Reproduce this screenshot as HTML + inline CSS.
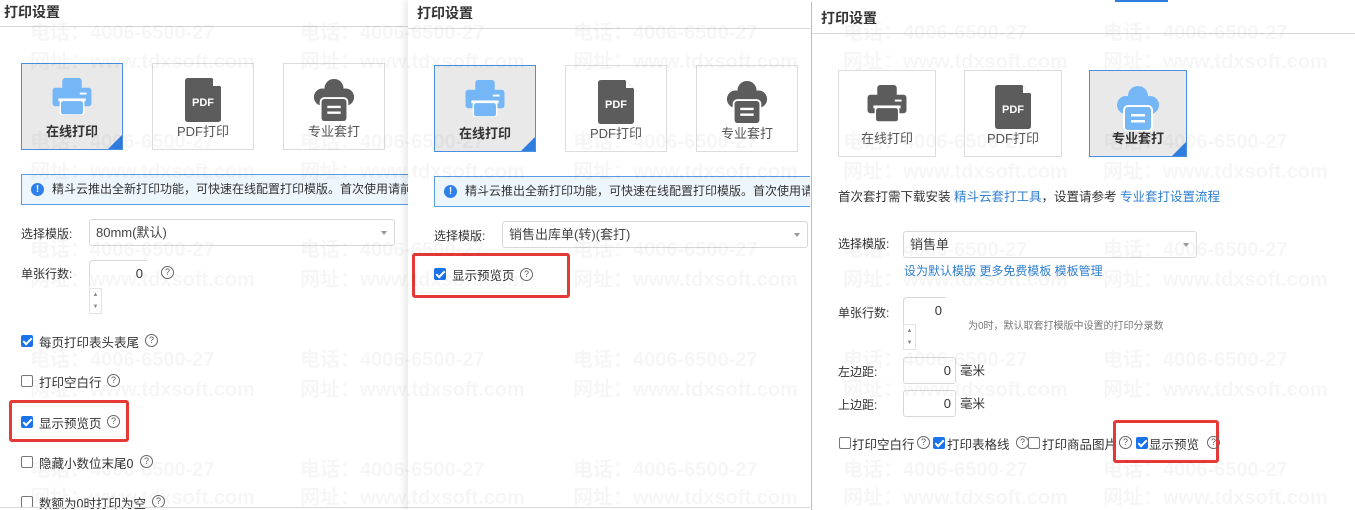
<!DOCTYPE html>
<html><head><meta charset="utf-8"><style>
*{margin:0;padding:0;box-sizing:border-box}
body{width:1355px;height:510px;overflow:hidden;background:#fff;font-family:"Liberation Sans","Noto Sans CJK SC",sans-serif;font-size:13px;color:#333;position:relative}
.a{position:absolute}
.panel{position:absolute;background:#fff;overflow:hidden}
.title{position:absolute;font-weight:bold;font-size:14px;color:#333}
.hr{position:absolute;height:1px;background:#d8d8d8}
.card{position:absolute;width:102px;height:87px;border:1px solid #dcdcdc;background:#fff}
.card.sel{border-color:#4a8fe0;background:#e9e9e9}
.card.sel:after{content:"";position:absolute;right:0;bottom:0;border-style:solid;border-width:0 0 14px 14px;border-color:transparent transparent #2f7de1 transparent}
.card svg{position:absolute;left:50%;transform:translateX(-50%);top:14px}
.card .lb{position:absolute;left:0;right:0;top:57px;text-align:center;font-size:13px;color:#555}
.card.sel .lb{color:#333;font-weight:bold}
.info{position:absolute;height:31px;border:1px solid #5b9be0;background:#eef6fd;font-size:12px;color:#333;line-height:29px;padding-left:30px;white-space:nowrap;overflow:hidden}
.info i{position:absolute;left:9px;top:8px;width:13px;height:13px;border-radius:50%;background:#2f80e8;color:#fff;font-style:normal;font-weight:bold;font-size:10px;line-height:13px;text-align:center}
.sel2{position:absolute;height:27px;border:1px solid #d8d8d8;border-radius:3px;font-size:13px;line-height:25px;padding-left:6px;color:#444}
.sel2:after{content:"";position:absolute;right:7px;top:11px;border-style:solid;border-width:4px 3px 0 3px;border-color:#999 transparent transparent}
.lab{position:absolute;font-size:12px;color:#333}
.inp{position:absolute;height:27px;border-top:1px solid #d8d8d8;border-left:1px solid #d8d8d8;border-radius:4px 0 0 0;text-align:right;padding-right:4px;font-size:13px;line-height:25px}
.inp2{position:absolute;height:27px;border:1px solid #d8d8d8;border-radius:3px;text-align:right;padding-right:4px;font-size:13px;line-height:25px}
.spin{position:absolute;width:13px;height:26px;border:1px solid #e3e3e3;font-size:6px;color:#888;text-align:center;line-height:12px}
.cb{position:absolute;width:12px;height:12px;border:1px solid #777;border-radius:2px;background:#fff}
.cb.on{background:#1a73e8;border-color:#1a73e8}
.cb.on:after{content:"";position:absolute;left:3px;top:0px;width:3px;height:7px;border:solid #fff;border-width:0 2px 2px 0;transform:rotate(45deg)}
.q{position:absolute;width:13px;height:13px;border:1px solid #666;border-radius:50%;font-size:9px;line-height:11px;text-align:center;color:#555}
.t{position:absolute;font-size:12.5px;color:#333;white-space:nowrap}
.red{position:absolute;border:3px solid #e53935;border-radius:3px}
.lnk{color:#2f7fd0}
.wm{position:absolute;font-family:"Liberation Sans","Noto Sans CJK SC",sans-serif;font-weight:bold;font-size:20px;color:rgba(0,0,0,0.035);white-space:nowrap;pointer-events:none;line-height:24px}
</style></head><body>

<svg width="0" height="0" style="position:absolute">
<defs>
<symbol id="pr" viewBox="0 0 40 38"><rect x="10" y="0" width="20" height="13" rx="3"/><rect x="0" y="10" width="40" height="19" rx="3"/><rect x="28" y="15" width="7" height="2" fill="#fff"/><rect x="6" y="21" width="28" height="3" fill="#fff"/><rect x="8" y="23" width="24" height="15" rx="3" stroke="#fff" stroke-width="1.5"/></symbol>
<symbol id="pdf" viewBox="0 0 36 44"><path d="M3 0H27L36 9V41Q36 44 33 44H3Q0 44 0 41V3Q0 0 3 0Z"/><path d="M28 1V8H35Z" fill="#fff"/><text x="18" y="28" text-anchor="middle" font-family="Liberation Sans" font-weight="bold" font-size="11" fill="#fff">PDF</text></symbol>
<symbol id="cl" viewBox="0 0 44 46"><circle cx="22" cy="11" r="10"/><circle cx="10" cy="20" r="9"/><circle cx="34" cy="20" r="9"/><rect x="8" y="14" width="28" height="12"/><rect x="8" y="21" width="28" height="25" rx="4" stroke="#fff" stroke-width="2"/><rect x="15" y="29" width="14" height="2.5" fill="#fff"/><rect x="15" y="35" width="14" height="2.5" fill="#fff"/></symbol>
</defs></svg>

<!-- PANEL 1 -->
<div class="panel" style="left:0;top:0;width:410px;height:510px">
<div class="title" style="left:4px;top:2px">打印设置</div>
<div class="hr" style="left:0;top:26px;width:410px"></div>
<div class="card sel" style="left:21px;top:63px"><svg width="39" height="37" fill="#74b6f6"><use href="#pr"/></svg><div class="lb">在线打印</div></div>
<div class="card" style="left:152px;top:63px"><svg width="36" height="44" fill="#5c5c5c"><use href="#pdf"/></svg><div class="lb">PDF打印</div></div>
<div class="card" style="left:283px;top:63px"><svg width="44" height="44" fill="#5c5c5c"><use href="#cl"/></svg><div class="lb">专业套打</div></div>
<div class="info" style="left:21px;top:174px;width:400px"><i>!</i>精斗云推出全新打印功能，可快速在线配置打印模版。首次使用请前往</div>
<div class="lab" style="left:21px;top:225px">选择模版:</div>
<div class="sel2" style="left:89px;top:219px;width:306px">80mm(默认)</div>
<div class="lab" style="left:21px;top:265px">单张行数:</div>
<div class="inp" style="left:89px;top:260px;width:58px">0</div>
<div class="q" style="left:161px;top:266px">?</div>
<div class="spin" style="left:89px;top:288px">▲<br>▼</div>
<div class="cb on" style="left:21px;top:335px"></div><div class="t" style="left:39px;top:332px">每页打印表头表尾</div><div class="q" style="left:145px;top:334px">?</div>
<div class="cb" style="left:21px;top:375px"></div><div class="t" style="left:39px;top:372px">打印空白行</div><div class="q" style="left:107px;top:374px">?</div>
<div class="red" style="left:9px;top:400px;width:120px;height:42px"></div>
<div class="cb on" style="left:21px;top:416px"></div><div class="t" style="left:39px;top:413px">显示预览页</div><div class="q" style="left:107px;top:415px">?</div>
<div class="cb" style="left:21px;top:456px"></div><div class="t" style="left:39px;top:453px">隐藏小数位末尾0</div><div class="q" style="left:140px;top:455px">?</div>
<div class="cb" style="left:21px;top:496px"></div><div class="t" style="left:39px;top:493px">数额为0时打印为空</div><div class="q" style="left:152px;top:495px">?</div>
<div class="hr" style="left:0;top:507px;width:410px"></div>
</div>

<!-- PANEL 2 -->
<div class="panel" style="left:408px;top:0;width:402px;height:510px;box-shadow:-4px 0 6px rgba(0,0,0,0.08)">
<div class="title" style="left:9px;top:3px">打印设置</div>
<div class="hr" style="left:0;top:28px;width:402px"></div>
<div class="card sel" style="left:26px;top:65px"><svg width="39" height="37" fill="#74b6f6"><use href="#pr"/></svg><div class="lb">在线打印</div></div>
<div class="card" style="left:157px;top:65px"><svg width="36" height="44" fill="#5c5c5c"><use href="#pdf"/></svg><div class="lb">PDF打印</div></div>
<div class="card" style="left:288px;top:65px"><svg width="44" height="44" fill="#5c5c5c"><use href="#cl"/></svg><div class="lb">专业套打</div></div>
<div class="info" style="left:26px;top:176px;width:390px"><i>!</i>精斗云推出全新打印功能，可快速在线配置打印模版。首次使用请前往</div>
<div class="lab" style="left:26px;top:227px">选择模版:</div>
<div class="sel2" style="left:94px;top:221px;width:306px">销售出库单(转)(套打)</div>
<div class="red" style="left:4px;top:253px;width:158px;height:45px"></div>
<div class="cb on" style="left:26px;top:268px"></div><div class="t" style="left:44px;top:265px">显示预览页</div><div class="q" style="left:112px;top:268px">?</div>
<div class="hr" style="left:0;top:507px;width:402px"></div>
</div>

<!-- PANEL 3 -->
<div class="panel" style="left:811px;top:2px;width:544px;height:508px;border-left:1px solid #bbb">
<div class="title" style="left:9px;top:6px">打印设置</div>
<div class="hr" style="left:0;top:31px;width:544px"></div>
<div class="card" style="left:26px;top:68px;width:98px"><svg width="39" height="37" fill="#5c5c5c"><use href="#pr"/></svg><div class="lb">在线打印</div></div>
<div class="card" style="left:152px;top:68px;width:98px"><svg width="36" height="44" fill="#5c5c5c"><use href="#pdf"/></svg><div class="lb">PDF打印</div></div>
<div class="card sel" style="left:277px;top:68px;width:98px"><svg width="44" height="46" fill="#74b6f6"><use href="#cl"/></svg><div class="lb">专业套打</div></div>
<div class="t" style="left:26px;top:184px">首次套打需下载安装 <span class="lnk">精斗云套打工具</span>，设置请参考 <span class="lnk">专业套打设置流程</span></div>
<div class="lab" style="left:26px;top:233px">选择模版:</div>
<div class="sel2" style="left:91px;top:229px;width:294px">销售单</div>
<div class="t lnk" style="left:92px;top:260px;font-size:12px">设为默认模版 更多免费模板 模板管理</div>
<div class="lab" style="left:26px;top:302px">单张行数:</div>
<div class="inp" style="left:91px;top:295px;width:43px">0</div>
<div class="spin" style="left:91px;top:322px">▲<br>▼</div>
<div class="t" style="left:156px;top:315px;font-size:10px;color:#777">为0时，默认取套打模版中设置的打印分录数</div>
<div class="lab" style="left:26px;top:361px">左边距:</div>
<div class="inp2" style="left:91px;top:355px;width:53px">0</div><div class="t" style="left:148px;top:358px">毫米</div>
<div class="lab" style="left:26px;top:394px">上边距:</div>
<div class="inp2" style="left:91px;top:388px;width:53px">0</div><div class="t" style="left:148px;top:391px">毫米</div>
<div class="cb" style="left:27px;top:435px"></div><div class="t" style="left:40px;top:432px">打印空白行</div><div class="q" style="left:105px;top:434px">?</div>
<div class="cb on" style="left:121px;top:435px"></div><div class="t" style="left:135px;top:432px">打印表格线</div><div class="q" style="left:204px;top:434px">?</div>
<div class="cb" style="left:216px;top:435px"></div><div class="t" style="left:230px;top:432px">打印商品图片</div><div class="q" style="left:307px;top:434px">?</div>
<div class="red" style="left:301px;top:418px;width:106px;height:43px"></div>
<div class="cb on" style="left:324px;top:435px"></div><div class="t" style="left:337px;top:432px">显示预览</div><div class="q" style="left:395px;top:434px">?</div>
</div>
<div class="a" style="left:1115px;top:0;width:53px;height:2px;background:#2f7de1"></div>

<!-- watermarks -->
<div class="wm" style="left:30px;top:21px">电话：4006-6500-27</div><div class="wm" style="left:30px;top:50px">网址：www.tdxsoft.com</div>
<div class="wm" style="left:300px;top:21px">电话：4006-6500-27</div><div class="wm" style="left:300px;top:50px">网址：www.tdxsoft.com</div>
<div class="wm" style="left:573px;top:21px">电话：4006-6500-27</div><div class="wm" style="left:573px;top:50px">网址：www.tdxsoft.com</div>
<div class="wm" style="left:843px;top:21px">电话：4006-6500-27</div><div class="wm" style="left:843px;top:50px">网址：www.tdxsoft.com</div>
<div class="wm" style="left:1103px;top:21px">电话：4006-6500-27</div><div class="wm" style="left:1103px;top:50px">网址：www.tdxsoft.com</div>
<div class="wm" style="left:30px;top:130px">电话：4006-6500-27</div><div class="wm" style="left:30px;top:160px">网址：www.tdxsoft.com</div>
<div class="wm" style="left:300px;top:130px">电话：4006-6500-27</div><div class="wm" style="left:300px;top:160px">网址：www.tdxsoft.com</div>
<div class="wm" style="left:573px;top:130px">电话：4006-6500-27</div><div class="wm" style="left:573px;top:160px">网址：www.tdxsoft.com</div>
<div class="wm" style="left:843px;top:130px">电话：4006-6500-27</div><div class="wm" style="left:843px;top:160px">网址：www.tdxsoft.com</div>
<div class="wm" style="left:1103px;top:130px">电话：4006-6500-27</div><div class="wm" style="left:1103px;top:160px">网址：www.tdxsoft.com</div>
<div class="wm" style="left:30px;top:238px">电话：4006-6500-27</div><div class="wm" style="left:30px;top:268px">网址：www.tdxsoft.com</div>
<div class="wm" style="left:300px;top:238px">电话：4006-6500-27</div><div class="wm" style="left:300px;top:268px">网址：www.tdxsoft.com</div>
<div class="wm" style="left:573px;top:238px">电话：4006-6500-27</div><div class="wm" style="left:573px;top:268px">网址：www.tdxsoft.com</div>
<div class="wm" style="left:843px;top:238px">电话：4006-6500-27</div><div class="wm" style="left:843px;top:268px">网址：www.tdxsoft.com</div>
<div class="wm" style="left:1103px;top:238px">电话：4006-6500-27</div><div class="wm" style="left:1103px;top:268px">网址：www.tdxsoft.com</div>
<div class="wm" style="left:30px;top:348px">电话：4006-6500-27</div><div class="wm" style="left:30px;top:378px">网址：www.tdxsoft.com</div>
<div class="wm" style="left:300px;top:348px">电话：4006-6500-27</div><div class="wm" style="left:300px;top:378px">网址：www.tdxsoft.com</div>
<div class="wm" style="left:573px;top:348px">电话：4006-6500-27</div><div class="wm" style="left:573px;top:378px">网址：www.tdxsoft.com</div>
<div class="wm" style="left:843px;top:348px">电话：4006-6500-27</div><div class="wm" style="left:843px;top:378px">网址：www.tdxsoft.com</div>
<div class="wm" style="left:1103px;top:348px">电话：4006-6500-27</div><div class="wm" style="left:1103px;top:378px">网址：www.tdxsoft.com</div>
<div class="wm" style="left:30px;top:458px">电话：4006-6500-27</div><div class="wm" style="left:30px;top:486px">网址：www.tdxsoft.com</div>
<div class="wm" style="left:300px;top:458px">电话：4006-6500-27</div><div class="wm" style="left:300px;top:486px">网址：www.tdxsoft.com</div>
<div class="wm" style="left:573px;top:458px">电话：4006-6500-27</div><div class="wm" style="left:573px;top:486px">网址：www.tdxsoft.com</div>
<div class="wm" style="left:843px;top:458px">电话：4006-6500-27</div><div class="wm" style="left:843px;top:486px">网址：www.tdxsoft.com</div>
<div class="wm" style="left:1103px;top:458px">电话：4006-6500-27</div><div class="wm" style="left:1103px;top:486px">网址：www.tdxsoft.com</div>
</body></html>
